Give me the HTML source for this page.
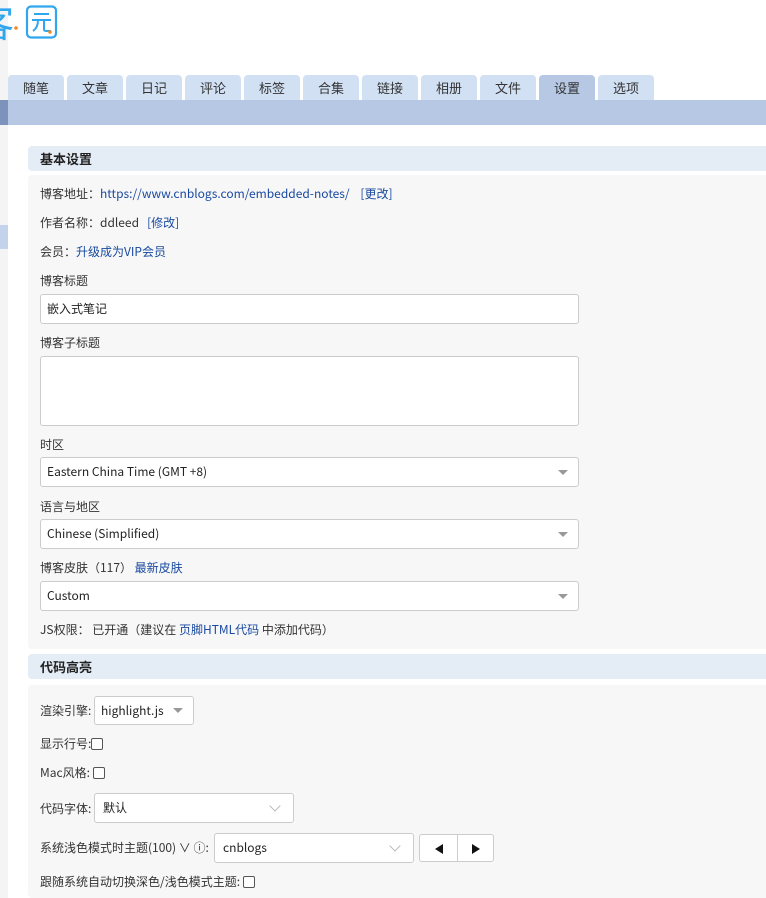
<!DOCTYPE html>
<html><head><meta charset="utf-8"><style>
*{box-sizing:border-box;margin:0;padding:0}
body{width:766px;height:898px;overflow:hidden;background:#fff;font-family:"Noto Sans CJK SC","Liberation Sans",sans-serif;font-size:12px;color:#333;position:relative}
.abs{position:absolute}
.tab{position:absolute;top:75px;width:56px;height:25px;background:#d2e0f4;border-radius:4px 4px 0 0;text-align:center;line-height:25px;font-size:13px;color:#333}
.tab.on{background:#b6c8e4}
.hd{position:absolute;left:28px;width:738px;height:25px;background:#e4ecf6;border-radius:4px 0 0 4px;font-weight:bold;font-size:13px;line-height:25px;padding-left:12px;color:#222}
.bd{position:absolute;left:28px;width:738px;background:#f7f7f7;border-radius:4px 0 0 4px}
.t{position:absolute;left:40px;font-size:12px;line-height:18px;white-space:nowrap}
a{color:#1a4aa0;text-decoration:none}
.in{position:absolute;left:40px;width:539px;background:#fff;border:1px solid #ccc;border-radius:3px;font-size:12px;padding-left:6px;color:#222}
.caret{position:absolute;right:10px;top:12px;width:0;height:0;border-left:5px solid transparent;border-right:5px solid transparent;border-top:5px solid #999}
.cb{display:inline-block;width:12px;height:12px;border:1px solid #555;border-radius:2px;vertical-align:-2px;background:#fff}
.chev{position:absolute;right:14px;top:8px;width:8px;height:8px;border-right:1px solid #bbb;border-bottom:1px solid #bbb;transform:rotate(45deg)}
</style></head><body>
<div class="abs" style="left:0;top:0;width:8px;height:898px;background:#f4f4f4"></div>
<div class="abs" style="left:0;top:100px;width:8px;height:25px;background:#7d93bb"></div>
<div class="abs" style="left:0;top:225px;width:8px;height:24px;background:#c3d3ec"></div>
<svg class="abs" style="left:0;top:0" width="70" height="44">
<text x="-24" y="37" font-size="38" fill="#2fa6ee" font-family="Noto Sans CJK SC">客</text>
<circle cx="16" cy="28" r="1.8" fill="#f08a24"/>
<rect x="27" y="6.5" width="29" height="31" rx="4" fill="none" stroke="#2fa6ee" stroke-width="2.2"/>
<path d="M34 14h15M32 20h19M38 20c0 6-2 9-5 11M44 20v9c0 2 1 2 3 2h4" fill="none" stroke="#2fa6ee" stroke-width="2"/>
<circle cx="50" cy="32" r="1.8" fill="#f08a24"/>
</svg>
<div class="tab" style="left:8px">随笔</div><div class="tab" style="left:67px">文章</div><div class="tab" style="left:126px">日记</div><div class="tab" style="left:185px">评论</div><div class="tab" style="left:244px">标签</div><div class="tab" style="left:303px">合集</div><div class="tab" style="left:362px">链接</div><div class="tab" style="left:421px">相册</div><div class="tab" style="left:480px">文件</div><div class="tab on" style="left:539px">设置</div><div class="tab" style="left:598px">选项</div>
<div class="abs" style="left:8px;top:100px;width:758px;height:25px;background:#b6c8e4"></div>

<div class="hd" style="top:146px">基本设置</div>
<div class="bd" style="top:175px;height:474px"></div>
<div class="t" style="top:185px">博客地址：<a>https://www.cnblogs.com/embedded-notes/</a>&nbsp;&nbsp;&nbsp; <a>[更改]</a></div>
<div class="t" style="top:214px">作者名称：ddleed &nbsp;&nbsp;<a>[修改]</a></div>
<div class="t" style="top:243px">会员：<a>升级成为VIP会员</a></div>
<div class="t" style="top:272px">博客标题</div>
<div class="in" style="top:294px;height:30px;line-height:28px">嵌入式笔记</div>
<div class="t" style="top:334px">博客子标题</div>
<div class="in" style="top:356px;height:70px"></div>
<div class="t" style="top:436px">时区</div>
<div class="in" style="top:457px;height:30px;line-height:28px">Eastern China Time (GMT +8)<span class="caret"></span></div>
<div class="t" style="top:498px">语言与地区</div>
<div class="in" style="top:519px;height:30px;line-height:28px">Chinese (Simplified)<span class="caret"></span></div>
<div class="t" style="top:559px">博客皮肤（117） <a>最新皮肤</a></div>
<div class="in" style="top:581px;height:30px;line-height:28px">Custom<span class="caret"></span></div>
<div class="t" style="top:621px">JS权限： 已开通（建议在 <a>页脚HTML代码</a> 中添加代码）</div>

<div class="hd" style="top:654px">代码高亮</div>
<div class="bd" style="top:685px;height:213px"></div>
<div class="t" style="top:702px">渲染引擎:</div>
<div class="in" style="left:94px;top:696px;width:100px;height:29px;line-height:27px;padding-left:6px">highlight.js<span class="caret" style="top:11px"></span></div>
<div class="t" style="top:735px">显示行号:<span class="cb"></span></div>
<div class="t" style="top:764px">Mac风格: <span class="cb"></span></div>
<div class="t" style="top:800px">代码字体:</div>
<div class="in" style="left:94px;top:793px;width:200px;height:30px;line-height:28px;padding-left:8px">默认<span class="chev"></span></div>
<div class="t" style="top:839px">系统浅色模式时主题(100) ∨ ⓘ:</div>
<div class="in" style="left:214px;top:833px;width:200px;height:30px;line-height:28px;padding-left:8px">cnblogs<span class="chev"></span></div>
<div class="in" style="left:419px;top:834px;width:75px;height:28px;padding:0">
<div class="abs" style="left:37px;top:0;width:1px;height:26px;background:#ccc"></div>
<svg class="abs" style="left:14px;top:9px" width="10" height="10"><path d="M9 0v10L1 5z" fill="#111"/></svg>
<svg class="abs" style="left:51px;top:9px" width="10" height="10"><path d="M1 0v10l8-5z" fill="#111"/></svg>
</div>
<div class="t" style="top:873px">跟随系统自动切换深色/浅色模式主题: <span class="cb"></span></div>
</body></html>
